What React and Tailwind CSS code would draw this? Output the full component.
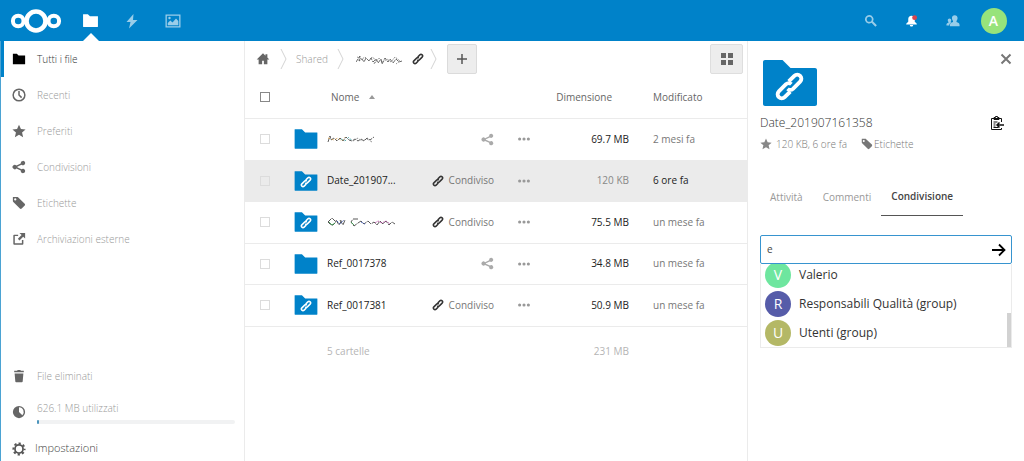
import React from "react";

const base = { viewBox: "0 0 16 16", fill: "currentColor", "aria-hidden": true };

function Folder({ className }) {
  return (
    <svg {...base} className={className}>
      <path d="M1.3 2h4.2L7.5 4h7.2c.2 0 .3.1.3.3v9.4c0 .2-.1.3-.3.3H1.3c-.2 0-.3-.1-.3-.3V2.3c0-.2.1-.3.3-.3z" />
    </svg>
  );
}

function LinkIcon({ className }) {
  return (
    <svg {...base} className={className} fill="none" stroke="currentColor" strokeWidth="2">
      <path d="M7 9.2A2.1 2.1 0 0 0 9.8 9.2L13.5 5.5A2.1 2.1 0 0 0 10.5 2.5L7.6 5.4" />
      <path d="M9 6.8A2.1 2.1 0 0 0 6.2 6.8L2.5 10.5A2.1 2.1 0 0 0 5.5 13.5L8.4 10.6" />
    </svg>
  );
}

function Share({ className }) {
  return (
    <svg {...base} className={className}>
      <path d="M12.5 1A2.5 2.5 0 0 0 10 3.5v.5L5 6.4A2.5 2.5 0 1 0 5 9.7l5 2.4v.4a2.5 2.5 0 1 0 .9-1.9L6 8.2V7.8l4.9-2.4A2.5 2.5 0 1 0 12.5 1z" />
    </svg>
  );
}

function Star({ className }) {
  return (
    <svg {...base} className={className}>
      <path d="M8 .8l2.2 4.9 5.3.5-4 3.6 1.2 5.3L8 12.4l-4.7 2.7 1.2-5.3-4-3.6 5.3-.5z" />
    </svg>
  );
}

function Tag({ className }) {
  return (
    <svg {...base} className={className}>
      <path fillRule="evenodd" d="M1.5 1h4.3c.4 0 .8.2 1.1.5l7.6 7.3c.6.6.6 1.5 0 2.1l-3.4 3.5c-.6.6-1.5.6-2.1 0L1.5 6.9C1.2 6.6 1 6.2 1 5.8V1.500C1 1.2 1.2 1 1.500 1zm2.2 1.6a1.300 1.300 0 1 0 0 2.600 1.300 1.300 0 0 0 0-2.600z" />
    </svg>
  );
}

function Clock({ className }) {
  return (
    <svg {...base} className={className} fill="none" stroke="currentColor" strokeWidth="1.7">
      <circle cx="8" cy="8" r="6.7" />
      <path d="M8 3.500V8l3 3" />
    </svg>
  );
}

function External({ className }) {
  return (
    <svg {...base} className={className}>
      <path d="M3 3h4v1.700H3.200v8.100h8.100V9H13v4.500c0 .6-.4 1-1 1H2.500c-.6 0-1-.4-1-1V4c0-.6.4-1 1-1zM8.500 1H15v6.500l-2.200-2.200L8.500 9.600 6.700 7.800 11 3.500z" />
    </svg>
  );
}

function Trash({ className }) {
  return (
    <svg {...base} className={className}>
      <path d="M6.500 1L5.800 2H2.500v1.800h11V2h-3.300l-.7-1zM3 5l.8 9.200c0 .5.4.8.9.8h6.600c.5 0 .9-.3.900-.8L13 5z" />
    </svg>
  );
}

function Quota({ className }) {
  return (
    <svg {...base} className={className}>
      <path fillRule="evenodd" d="M8 1a7 7 0 1 0 0 14A7 7 0 0 0 8 1zm0 1.600a5.400 5.400 0 0 1 3.800 9.200L8 8z" />
    </svg>
  );
}

function Gear({ className }) {
  return (
    <svg {...base} className={className} fill="none" stroke="currentColor">
      <circle cx="8" cy="8" r="4.600" strokeWidth="2" />
      <circle cx="8" cy="8" r="6.400" strokeWidth="2.200" strokeDasharray="2.600 2.426" strokeDashoffset="1.300" />
    </svg>
  );
}

function Home({ className }) {
  return (
    <svg {...base} className={className}>
      <path d="M8 1.500L.8 8.500H3V14h4v-4h2v4h4V8.500h2.200L13 6.300V2.500h-2.200v1.700z" />
    </svg>
  );
}

function Squiggle({ kind }) {
  if (kind === "crumb") {
    return (
      <svg viewBox="0 0 48 12" className="h-3 w-12" fill="none" stroke="#444" strokeWidth=".8" aria-hidden="true">
        <path d="M0 9l4-6-1 5 3-2 2 3 2-4 3 3 2-3 2 4 3-3 2 4 3-4 1 5 3-6 3 4 2-3 3 4 3-4 3 3 3-1" strokeDasharray="4 1" />
        <path d="M1 4l5 2 3-2 4 4 3-4 4 3-2 4 5-6 4 4 4-3 4 3 4-5 5 4-4 3" stroke="#777" strokeDasharray="2 1" />
      </svg>
    );
  }
  if (kind === "first") {
    return (
      <svg viewBox="0 0 48 10" className="h-[10px] w-12" fill="none" stroke="#333" strokeWidth=".8" aria-hidden="true">
        <path d="M1 8l2-6 1 4 3-2 3 3 3-3 3 3 3-4 3 3 3 1 3-2 3 2 3-2 3 2 3-3 3 2 4-3" strokeDasharray="4 1" />
        <path d="M1 4l6 2 4-2 4 3 3-4" stroke="#c9903c" strokeDasharray="2 2" />
        <path d="M14 5l4 2 4-4 3 4" stroke="#379aa0" strokeDasharray="2 2" />
        <path d="M26 7l5-3 4 3 5-2 5 3" stroke="#777" strokeDasharray="2 2" />
      </svg>
    );
  }
  return (
    <svg viewBox="0 0 68 10" className="h-[10px] w-[68px]" fill="none" stroke="#444" strokeWidth=".9" aria-hidden="true">
      <path d="M1 5l4-4 4 4-3 3-2 0zM9 3l3 5 3-5M13 3l3 5 2-5M31 2l-5 0-2 3 3 4 4-3M31 6l3-2 3 3 4-3 3 3 3-2 3 3 3-4 3 3 3-3 3 4 3-3 3 2" strokeDasharray="5 1" />
      <path d="M2 5l3 3 3-2M24 5l3 3" stroke="#3d9a4f" />
      <path d="M10 4l3 3 4-4M34 5l4 2" stroke="#425bb5" strokeDasharray="2 1" />
      <path d="M48 6l3-2 4 2 4-2 4 3" stroke="#b34fa0" strokeDasharray="2 1" />
    </svg>
  );
}

const nav = [
  ["Tutti i file", Folder],
  ["Recenti", Clock],
  ["Preferiti", Star],
  ["Condivisioni", Share],
  ["Etichette", Tag],
  ["Archiviazioni esterne", External],
];

const files = [
  { scribble: "first", size: "69.7 MB", date: "2 mesi fa" },
  { name: "Date_201907...", shared: true, size: "120 KB", date: "6 ore fa", selected: true },
  { scribble: "third", shared: true, size: "75.5 MB", date: "un mese fa" },
  { name: "Ref_0017378", size: "34.8 MB", date: "un mese fa" },
  { name: "Ref_0017381", shared: true, size: "50.9 MB", date: "un mese fa" },
];

const sharees = [
  ["V", "Valerio", "bg-[#6ee69f]"],
  ["R", "Responsabili Qualità (group)", "bg-[#565ca9]"],
  ["U", "Utenti (group)", "bg-[#b4b866]"],
];

function Header() {
  const cell = "flex h-full w-[41px] items-center justify-center";
  return (
    <header className="flex h-[41px] flex-none items-center justify-between bg-[#0082c9] px-[10px] text-white">
      <div className="flex h-full items-center">
        <a href="#home" aria-label="Home" className="mr-2">
          <svg viewBox="0 0 52 26" className="h-[26px] w-[52px]" fill="none" stroke="currentColor" strokeWidth="4" aria-hidden="true">
            <circle cx="26" cy="13" r="9.500" strokeWidth="4.600" />
            <circle cx="8.200" cy="13" r="5.300" />
            <circle cx="43.800" cy="13" r="5.300" />
          </svg>
        </a>
        <a href="#files" aria-label="File" className={`${cell} relative`}>
          <Folder className="h-[17px] w-[17px]" />
          <span className="absolute bottom-0 border-x-8 border-b-8 border-x-transparent border-b-white" />
        </a>
        <a href="#activity" aria-label="Attività" className={`${cell} opacity-60`}>
          <svg {...base} className="h-4 w-4"><path d="M9.500 1L2.500 9h4L5 15.500 13.500 7H9z" /></svg>
        </a>
        <a href="#gallery" aria-label="Galleria" className={`${cell} opacity-60`}>
          <svg {...base} className="h-4 w-4">
            <path fillRule="evenodd" d="M.5 1.500h15v13H.5zm1.300 1.300v10.400h12.400V2.800z" />
            <path d="M2.800 12.200V10l2.500-2.500 2.200 2 3.500-4 2.300 2.500v4.200z" />
            <circle cx="4.500" cy="5" r="1.200" />
          </svg>
        </a>
      </div>
      <div className="flex h-full items-center">
        <button aria-label="Cerca" className={`${cell} opacity-60`}>
          <svg {...base} className="h-[14px] w-[14px]">
            <path fillRule="evenodd" d="M6 1.200a4.800 4.800 0 1 0 2.600 8.800l4.400 4.500 1.700-1.700L10.200 8.400A4.800 4.800 0 0 0 6 1.200zm0 1.900a2.900 2.900 0 1 1 0 5.800 2.900 2.900 0 0 1 0-5.800z" />
          </svg>
        </button>
        <button aria-label="Notifiche" className={cell}>
          <svg {...base} className="h-[13px] w-[13px]">
            <path d="M8 2C5.500 2 4 3.800 4 6v3.500L1.500 12v1h13v-1L12 9.500V6c0-2.200-1.500-4-4-4zM6 13.500c0 1.200.8 2 2 2s2-.8 2-2z" />
            <circle cx="11.800" cy="4.500" r="3" fill="#d8434d" />
          </svg>
        </button>
        <button aria-label="Contatti" className={`${cell} opacity-60`}>
          <svg {...base} className="h-[14px] w-[14px]">
            <path d="M10 1.500c-2 0-3.200 1.300-3.200 3.200 0 1.500.4 2.300 1.200 3.300v1.200c-2 .7-3.500 1.500-3.500 3.300v1.500h11v-1.500c0-1.800-1.500-2.600-3.500-3.300V8c.8-1 1.200-1.800 1.200-3.300C13.200 2.800 12 1.500 10 1.500z" />
            <path d="M4 5C2.800 5 2 5.800 2 7c0 .9.300 1.400.8 2v.9C1.300 10.400.5 11 .5 12.200v.8h3.200c.2-1.800 1.300-2.900 2.600-3.600L5.200 9c.5-.6.8-1.100.8-2 0-1.200-.8-2-2-2z" />
          </svg>
        </button>
        <button aria-label="Account" className={cell}>
          <span className="flex h-[26px] w-[26px] items-center justify-center rounded-full bg-[#97e37b] text-sm font-semibold">A</span>
        </button>
      </div>
    </header>
  );
}

function Sidebar() {
  return (
    <nav className="flex w-[245px] flex-none flex-col justify-between border-r border-l border-r-[#ebebeb] border-l-[#4ba3d3] text-[10px] font-light">
      <ul>
        {nav.map(([label, Icon], i) => (
          <li key={label}>
            <a href="#view" className={i === 0 ? "flex h-9 items-center border-l-[3px] border-[#0082c9] pl-2 text-[#333]" : "flex h-9 items-center pl-[11px] text-[#999]"}>
              <Icon className={i === 0 ? "mr-[11px] h-[14px] w-[14px] text-black" : "mr-[11px] h-[14px] w-[14px] text-[#666]"} />
              {label}
            </a>
          </li>
        ))}
      </ul>
      <ul className="text-[#999]">
        <li>
          <a href="#trash" className="flex h-9 items-center pl-[11px]">
            <Trash className="mr-[11px] h-[14px] w-[14px] text-[#666]" />
            File eliminati
          </a>
        </li>
        <li className="flex h-9 items-center pr-[9px] pl-[11px]">
          <Quota className="mr-[11px] h-[14px] w-[14px] flex-none text-[#666]" />
          <div className="flex flex-1 flex-col gap-1">
            <span className="leading-4">626.1 MB utilizzati</span>
            <div className="h-1 rounded-full bg-[#f1f2f3]">
              <div className="h-full w-[2px] rounded-full bg-[#4b95bd]" />
            </div>
          </div>
        </li>
        <li>
          <button className="flex h-[31px] w-full items-center pt-[6px] pl-[11px] text-[11px] text-[#444]">
            <Gear className="mr-[9px] h-[14px] w-[14px] text-[#555]" />
            Impostazioni
          </button>
        </li>
      </ul>
    </nav>
  );
}

function Chevron() {
  return (
    <svg viewBox="0 0 7 22" className="h-[22px] w-[7px] flex-none" fill="none" stroke="#d4d4d4" aria-hidden="true">
      <path d="M1 1l5 10-5 10" />
    </svg>
  );
}

function FileRow({ file }) {
  const { name, scribble, shared, size, date, selected } = file;
  const check = "block h-[10px] w-[10px] appearance-none border border-[#dcdcdc]";
  return (
    <tr className={selected ? "border-b border-[#ebebeb] bg-[#ebebeb] odd:h-[42px] even:h-[41px]" : "border-b border-[#ebebeb] odd:h-[42px] even:h-[41px]"}>
      <td className="pl-[15px]"><input type="checkbox" aria-label="Seleziona" className={check} /></td>
      <td className="pl-[7px]">
        <div className="relative h-[26px] w-[26px] text-[#0082c9]">
          <Folder className="h-full w-full" />
          {shared && <LinkIcon className="absolute top-[8px] left-[7px] h-3 w-3 text-white" />}
        </div>
      </td>
      <td className="whitespace-nowrap text-[#222]">{name || <Squiggle kind={scribble} />}</td>
      <td>
        {shared ? (
          <a href="#share" className="flex items-center justify-end gap-[5px] text-[#777]">
            <LinkIcon className="h-3 w-3 text-[#333]" />
            Condiviso
          </a>
        ) : (
          <button aria-label="Condividi" className="ml-auto block text-[#aaa]"><Share className="h-[13px] w-[13px]" /></button>
        )}
      </td>
      <td>
        <button aria-label="Azioni" className="mx-auto block text-[#999]">
          <svg {...base} className="h-[14px] w-[14px]"><circle cx="3" cy="8" r="1.800" /><circle cx="8" cy="8" r="1.800" /><circle cx="13" cy="8" r="1.800" /></svg>
        </button>
      </td>
      <td className={selected ? "text-right text-[#888]" : "text-right text-[#222]"}>{size}</td>
      <td className={selected ? "pl-6 text-[#222]" : "pl-6 text-[#777]"}>{date}</td>
    </tr>
  );
}

function Files() {
  return (
    <main className="min-w-0 flex-1">
      <div className="flex h-9 items-center pr-1 pl-[11px] text-[10px] font-light text-[#999]">
        <a href="#root" aria-label="Home"><Home className="h-[14px] w-[14px] text-[#666]" /></a>
        <div className="ml-[10px] flex flex-1 items-center">
          <Chevron />
          <a href="#shared" className="mx-[9px]">Shared</a>
          <Chevron />
          <a href="#folder" aria-label="Cartella" className="mr-2 ml-3"><Squiggle kind="crumb" /></a>
          <LinkIcon className="mr-[6px] h-3 w-3 text-[#333]" />
          <Chevron />
          <button aria-label="Nuovo" className="ml-[10px] flex h-[30px] w-[30px] items-center justify-center rounded-xs border border-[#dbdbdb] bg-[#ededed] text-[#555]">
            <svg viewBox="0 0 12 12" className="h-3 w-3" stroke="currentColor" strokeWidth="1.500" aria-hidden="true"><path d="M6 1v10M1 6h10" /></svg>
          </button>
        </div>
        <button aria-label="Vista a griglia" className="flex h-[30px] w-[33px] items-center justify-center rounded-xs border border-[#dedede] bg-[#ededed] text-[#666]">
          <svg viewBox="0 0 12 12" className="h-3 w-3" fill="currentColor" aria-hidden="true"><path d="M0 0h5v5H0zM7 0h5v5H7zM0 7h5v5H0zM7 7h5v5H7z" /></svg>
        </button>
      </div>
      <table className="w-full table-fixed border-collapse text-[10px]">
        <colgroup>
          <col className="w-[41px]" />
          <col className="w-[41px]" />
          <col />
          <col className="w-[88px]" />
          <col className="w-[59px]" />
          <col className="w-[76px]" />
          <col className="w-[118px]" />
        </colgroup>
        <thead>
          <tr className="h-[41px] border-b border-[#ebebeb] text-left text-[#666]">
            <th className="pl-[15px]"><input type="checkbox" aria-label="Seleziona tutto" className="block h-[10px] w-[10px] appearance-none border border-[#888]" /></th>
            <th />
            <th className="pl-1 font-normal" colSpan={2}>
              <span className="flex items-center gap-[10px]">
                Nome
                <svg viewBox="0 0 6 4" className="h-1 w-[6px]" fill="#999" aria-hidden="true"><path d="M0 4l3-4 3 4z" /></svg>
              </span>
            </th>
            <th className="pr-[17px] text-right font-normal" colSpan={2}>Dimensione</th>
            <th className="pl-6 font-normal">Modificato</th>
          </tr>
        </thead>
        <tbody>
          {files.map((f, i) => <FileRow key={i} file={f} />)}
        </tbody>
        <tfoot>
          <tr className="h-[50px] text-[#b5b5b5]">
            <td />
            <td />
            <td colSpan={3}>5 cartelle</td>
            <td className="text-right">231 MB</td>
            <td />
          </tr>
        </tfoot>
      </table>
    </main>
  );
}

function Details() {
  return (
    <aside className="w-[277px] flex-none border-l border-[#ebebeb] px-3 text-[10px]">
      <div className="flex items-start justify-between pt-3">
        <div className="relative mt-[7px] ml-[3px] text-[#0082c9]">
          <svg viewBox="0 0 54 46" className="h-[46px] w-[54px]" fill="currentColor" aria-hidden="true">
            <path d="M2 0h17.500l8 8H52c1.100 0 2 .9 2 2v34c0 1.100-.9 2-2 2H2c-1.100 0-2-.9-2-2V2C0 .9.900 0 2 0z" />
          </svg>
          <LinkIcon className="absolute top-[11px] left-[11px] h-[31px] w-[31px] text-white" />
        </div>
        <button aria-label="Chiudi" className="text-[#777]">
          <svg viewBox="0 0 12 12" className="h-3 w-3" stroke="currentColor" strokeWidth="2" aria-hidden="true"><path d="M1.500 1.500l9 9M10.500 1.500l-9 9" /></svg>
        </button>
      </div>
      <div className="mt-[7px] flex items-center justify-between pr-2">
        <h2 className="text-xs leading-5 font-light text-[#333]">Date_201907161358</h2>
        <button aria-label="Copia collegamento" className="text-[#111]">
          <svg viewBox="0 0 14 14" className="h-[14px] w-[14px]" fill="none" stroke="currentColor" aria-hidden="true">
            <path d="M11.500 6V2.500h-10v11h10V12M4 2.500V1.500h1.500V.5h2v1H9v2H4zM3.500 6h4M3.500 8h2M3.500 10h2M3.500 11.500h5" />
            <path d="M14 9H7.500M9.500 6.500L7 9l2.500 2.500" strokeWidth="1.500" />
          </svg>
        </button>
      </div>
      <div className="mt-px flex h-5 items-center font-light text-[#777]">
        <Star className="mr-1 h-3 w-3 text-[#888]" />
        120 KB, 6 ore fa
        <button className="ml-[14px] flex items-center gap-px">
          <Tag className="h-3 w-3 text-[#777]" />
          Etichette
        </button>
      </div>
      <div role="tablist" className="mt-6 flex text-[#999]">
        <button role="tab" aria-selected="false" className="h-[38px] px-[10px]">Attività</button>
        <button role="tab" aria-selected="false" className="h-[38px] px-[10px]">Commenti</button>
        <button role="tab" aria-selected="true" className="h-[38px] border-b border-[#555] px-[10px] font-semibold text-[#444]">Condivisione</button>
      </div>
      <div className="mt-[19px] flex h-[29px] items-center rounded-xs border border-[#3794cf] pr-[5px] pl-[6px]">
        <input type="text" aria-label="Condividi con" defaultValue="e" className="min-w-0 flex-1 text-[#444] outline-none" />
        <button aria-label="Invia" className="text-black">
          <svg viewBox="0 0 14 14" className="h-[14px] w-[14px]" fill="none" stroke="currentColor" strokeWidth="1.800" aria-hidden="true"><path d="M0 7h12.500M7 1.500L12.500 7 7 12.500" /></svg>
        </button>
      </div>
      <div className="flex h-[84px] border-x border-b border-[#ebebeb] text-xs text-[#333]">
        <ul className="flex flex-1 flex-col justify-end overflow-hidden pl-1">
          {sharees.map(([letter, label, color]) => (
            <li key={label} className="flex h-[29px] flex-none items-center gap-2">
              <span className={`flex h-[26px] w-[26px] items-center justify-center rounded-full text-sm text-white ${color}`}>{letter}</span>
              {label}
            </li>
          ))}
        </ul>
        <span className="h-[34px] w-1 flex-none self-end bg-[#d2d2d2]" />
      </div>
    </aside>
  );
}

export default function App() {
  return (
    <div className="flex min-h-screen flex-col bg-white font-['Open_Sans','Noto_Sans',sans-serif]">
      <Header />
      <div className="flex flex-1">
        <Sidebar />
        <Files />
        <Details />
      </div>
    </div>
  );
}
